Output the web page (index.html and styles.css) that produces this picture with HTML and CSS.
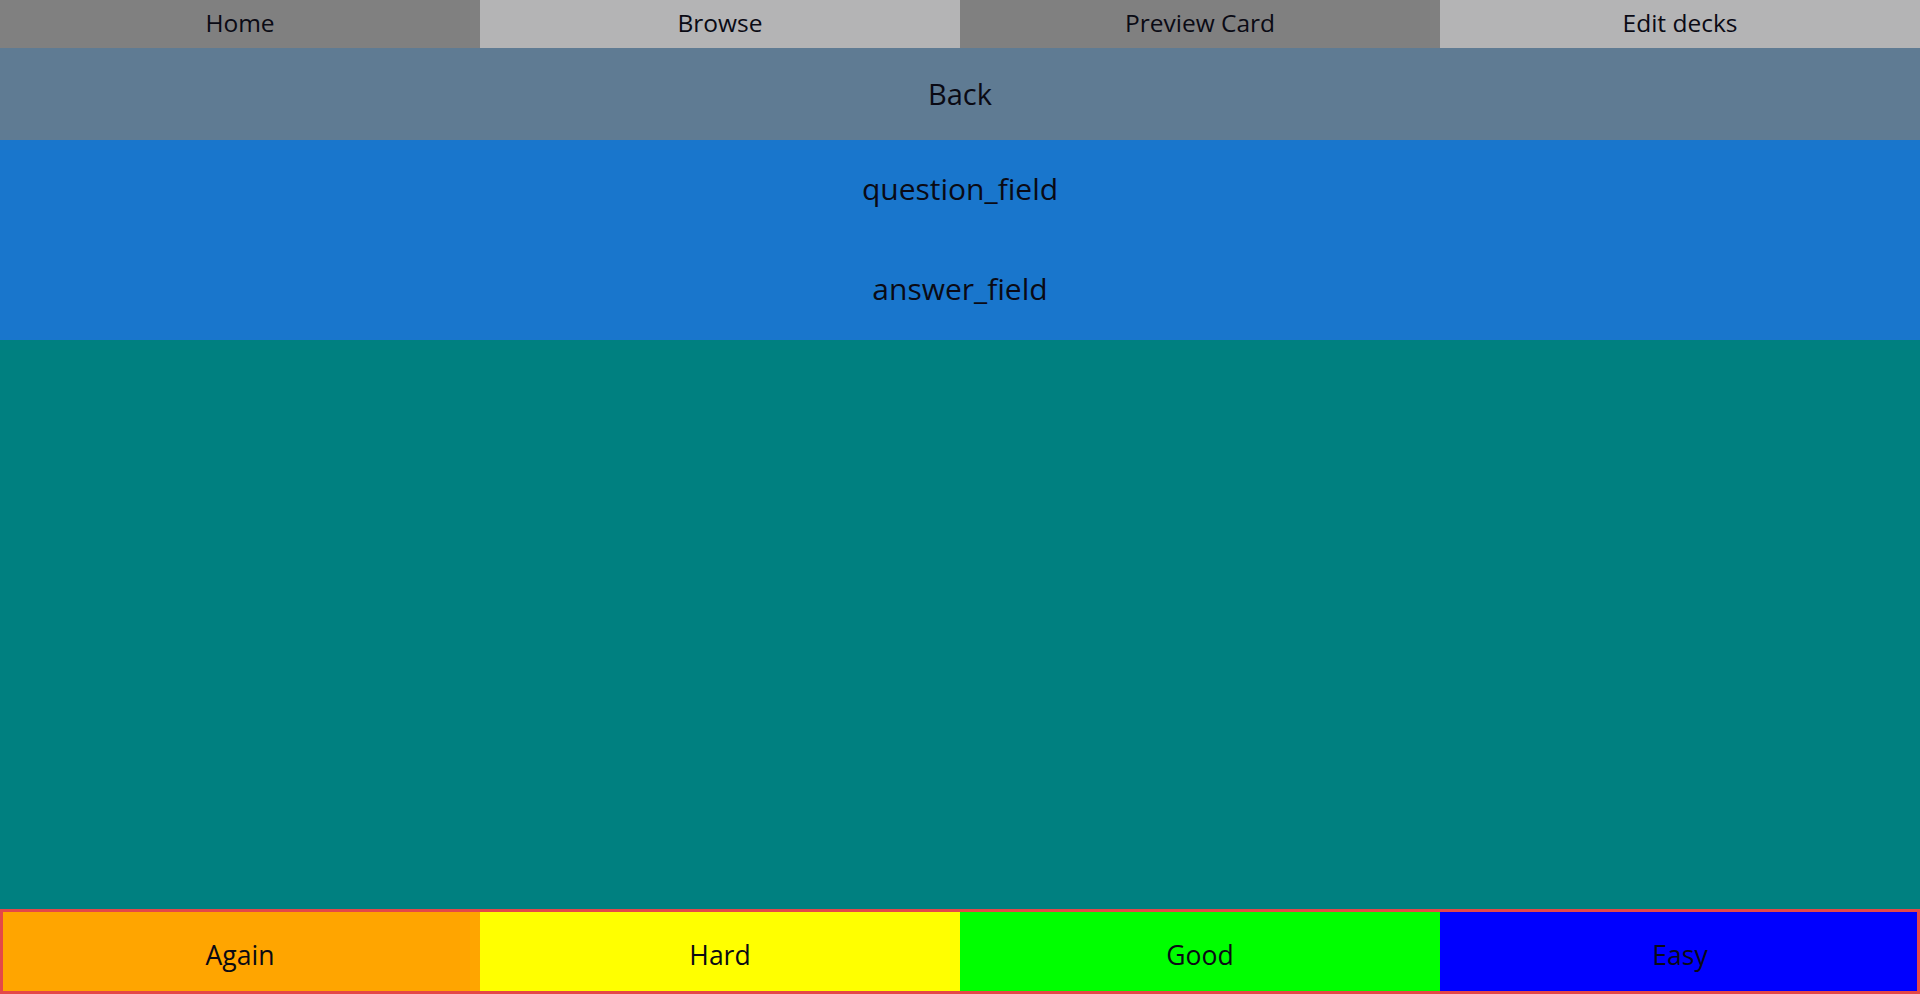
FILE: index.html
```html
<!DOCTYPE html>
<html lang="en">
<head>
<meta charset="utf-8">
<title>Preview Card</title>
<link rel="stylesheet" href="styles.css">
</head>
<body>
<div class="app">
  <nav class="tabs">
    <div class="tab tab-dark">Home</div>
    <div class="tab tab-light">Browse</div>
    <div class="tab tab-dark">Preview Card</div>
    <div class="tab tab-light">Edit decks</div>
  </nav>
  <div class="back">Back</div>
  <section class="fields">
    <div class="field">question_field</div>
    <div class="field">answer_field</div>
  </section>
  <main class="canvas"></main>
  <footer class="grades">
    <div class="grade grade-again">Again</div>
    <div class="grade grade-hard">Hard</div>
    <div class="grade grade-good">Good</div>
    <div class="grade grade-easy">Easy</div>
  </footer>
</div>
</body>
</html>
```

FILE: styles.css
```css
html, body {
  margin: 0;
  padding: 0;
  height: 100%;
}
body {
  font-family: "Open Sans", "Noto Sans", sans-serif;
  color: #0a0a14;
}
.app {
  display: flex;
  flex-direction: column;
  height: 994px;
  width: 1920px;
}
.tabs {
  display: grid;
  grid-template-columns: repeat(4, 1fr);
  height: 48px;
  flex: none;
}
.tab {
  display: flex;
  align-items: center;
  justify-content: center;
  font-size: 24.5px;
  padding-bottom: 4px;
}
.tab-dark { background: #808080; }
.tab-light { background: #b4b4b5; }
.back {
  height: 92px;
  flex: none;
  display: flex;
  align-items: center;
  justify-content: center;
  background: #5f7b93;
  font-size: 29px;
  padding-bottom: 2px;
  box-sizing: border-box;
}
.fields {
  flex: none;
  background: #1976cc;
  display: flex;
  flex-direction: column;
}
.field {
  height: 100px;
  display: flex;
  align-items: center;
  justify-content: center;
  font-size: 30px;
  padding-bottom: 4px;
  box-sizing: border-box;
}
.canvas {
  flex: 1;
  background: #008080;
}
.grades {
  flex: none;
  height: 85px;
  display: grid;
  grid-template-columns: repeat(4, 1fr);
  outline: 3px solid #e44848;
  outline-offset: -3px;
}
.grade {
  display: flex;
  align-items: center;
  justify-content: center;
  font-size: 26.5px;
  padding-top: 7px;
}
.grade-again { background: #ffa500; }
.grade-hard { background: #ffff00; }
.grade-good { background: #00ff00; }
.grade-easy { background: #0000ff; }
```
